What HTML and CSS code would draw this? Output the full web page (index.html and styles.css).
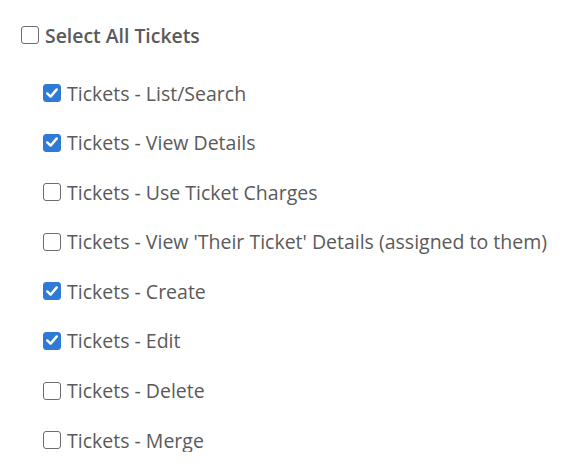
FILE: index.html
```html
<!DOCTYPE html>
<html>
<head>
<meta charset="utf-8">
<link rel="stylesheet" href="styles.css">
</head>
<body>
<div class="panel">
  <label class="row all"><span class="box"></span><span class="label">Select All Tickets</span></label>
  <div class="list">
    <label class="row"><span class="box on"><svg viewBox="0 0 18 18"><path d="M4.2 9.4 L7.6 12.6 L13.8 5.4" /></svg></span><span class="label">Tickets - List/Search</span></label>
    <label class="row"><span class="box on"><svg viewBox="0 0 18 18"><path d="M4.2 9.4 L7.6 12.6 L13.8 5.4" /></svg></span><span class="label">Tickets - View Details</span></label>
    <label class="row"><span class="box"></span><span class="label">Tickets - Use Ticket Charges</span></label>
    <label class="row"><span class="box"></span><span class="label">Tickets - View 'Their Ticket' Details (assigned to them)</span></label>
    <label class="row"><span class="box on"><svg viewBox="0 0 18 18"><path d="M4.2 9.4 L7.6 12.6 L13.8 5.4" /></svg></span><span class="label">Tickets - Create</span></label>
    <label class="row"><span class="box on"><svg viewBox="0 0 18 18"><path d="M4.2 9.4 L7.6 12.6 L13.8 5.4" /></svg></span><span class="label">Tickets - Edit</span></label>
    <label class="row"><span class="box"></span><span class="label">Tickets - Delete</span></label>
    <label class="row"><span class="box"></span><span class="label">Tickets - Merge</span></label>
  </div>
</div>
</body>
</html>
```
FILE: styles.css
```css
html, body {
  margin: 0;
  padding: 0;
  background: #ffffff;
}
body {
  font-family: "Open Sans", "Liberation Sans", sans-serif;
  color: #5a5a5a;
}
.panel {
  padding: 23px 0 0 21px;
}
.row {
  display: flex;
  align-items: center;
  height: 24px;
}
.label {
  font-size: 19.5px;
  margin-left: 6px;
  white-space: nowrap;
}
.row.all .label {
  font-size: 19.4px;
  font-weight: 600;
  margin-left: 6px;
}
.list {
  display: flex;
  flex-direction: column;
  gap: 25.6px;
  padding: 34px 0 0 22px;
}
.box {
  box-sizing: border-box;
  width: 18px;
  height: 18px;
  border: 1.5px solid #6b6b6b;
  border-radius: 3px;
  background: #fff;
  flex: none;
  display: flex;
}
.box.on {
  background: #2f7ad6;
  border-color: #2f7ad6;
}
.box svg {
  margin: -1.5px;
  width: 18px;
  height: 18px;
}
.box svg path {
  fill: none;
  stroke: #fff;
  stroke-width: 2.4;
  stroke-linecap: round;
  stroke-linejoin: round;
}
```
